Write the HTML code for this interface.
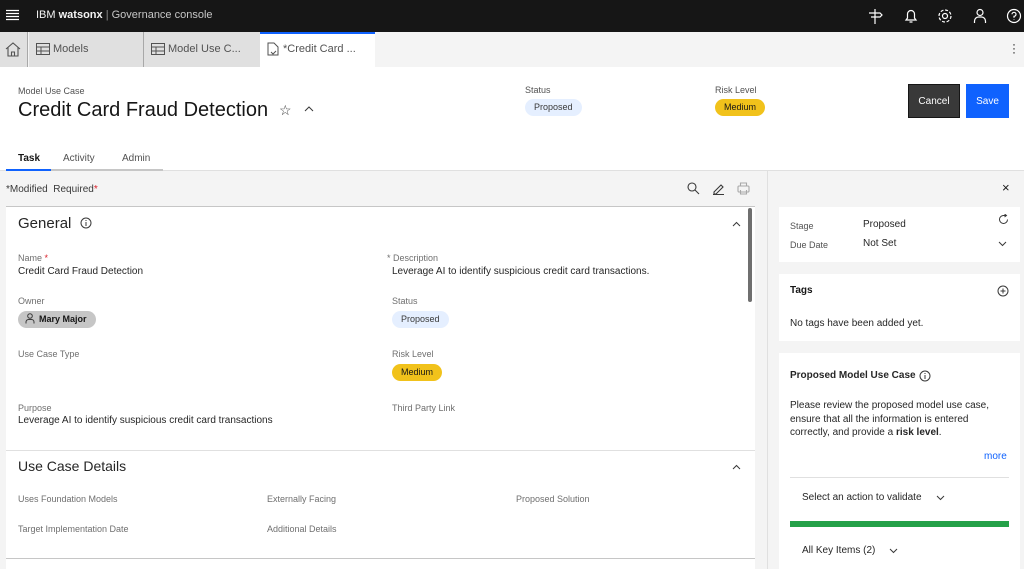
<!DOCTYPE html>
<html><head><meta charset="utf-8"><style>
*{box-sizing:border-box;margin:0;padding:0}
body{width:1024px;height:569px;overflow:hidden;font-family:"Liberation Sans",sans-serif;background:#f4f4f4;position:relative;color:#161616}
.a{position:absolute;white-space:nowrap}
.lbl{font-size:9px;color:#6f6f6f}
.val{font-size:10px;color:#262626}
.tag{position:absolute;height:17px;border-radius:9px;font-size:9px;padding:0 9px;line-height:17px}
.btn{display:flex;align-items:center;justify-content:center}
svg{position:absolute}
</style></head><body>
<div class="a" style="left:0;top:0;width:1024px;height:32px;background:#161616"></div>
<svg style="left:6px;top:9px" width="13" height="12"><path d="M0 1.5h13M0 4.5h13M0 7.5h13M0 10.5h13" stroke="#fff" stroke-width="1.2"/></svg>
<div class="a" style="left:36px;top:9px;font-size:11px;color:#f4f4f4">IBM <b>watsonx</b> <span style="color:#8d8d8d">|</span> <span style="color:#c6c6c6">Governance console</span></div>
<svg style="left:866px;top:7px" width="18" height="18" fill="none" stroke="#fff" stroke-width="1.2"><path d="M9 2v15M3 6h11l2 2-2 2H5"/></svg>
<svg style="left:902px;top:7px" width="18" height="18" fill="none" stroke="#fff" stroke-width="1.2"><path d="M4 13h10l-1.5-2V7a3.5 3.5 0 0 0-7 0v4zM7.5 15h3"/></svg>
<svg style="left:936px;top:7px" width="18" height="18" fill="none" stroke="#fff" stroke-width="1.2"><circle cx="9" cy="9" r="2.5"/><circle cx="9" cy="9" r="6" stroke-dasharray="3 1.7"/></svg>
<svg style="left:971px;top:7px" width="18" height="18" fill="none" stroke="#fff" stroke-width="1.2"><circle cx="9" cy="5.5" r="3"/><path d="M3.5 16v-2a4 4 0 0 1 4-4h3a4 4 0 0 1 4 4v2"/></svg>
<svg style="left:1005px;top:7px" width="18" height="18" fill="none" stroke="#fff" stroke-width="1.2"><circle cx="9" cy="9" r="6.5"/><path d="M7 7.3a2 2 0 1 1 2 2v1.5M9 12.5v.5"/></svg>

<div class="a" style="left:0;top:32px;width:1024px;height:35px;background:#f4f4f4"></div>
<div class="a" style="left:0;top:32px;width:28px;height:35px;background:#e0e0e0;border-right:1px solid #a8a8a8"></div>
<svg style="left:5px;top:42px" width="16" height="15" fill="none" stroke="#525252" stroke-width="1.1"><path d="M1 7L8 1l7 6M3 5.5V14h10V5.5M6.5 14v-4h3v4"/></svg>
<div class="a" style="left:29px;top:32px;width:115px;height:35px;background:#e0e0e0;border-right:1px solid #a8a8a8"></div>
<div class="a" style="left:144px;top:32px;width:116px;height:35px;background:#e0e0e0"></div>
<svg style="left:36px;top:43px" width="14" height="12" fill="none" stroke="#525252"><rect x=".5" y=".5" width="13" height="11"/><path d="M.5 4h13M.5 8h13M5 4v8"/></svg>
<div class="a" style="left:53px;top:43px;font-size:11px;color:#525252">Models</div>
<svg style="left:151px;top:43px" width="14" height="12" fill="none" stroke="#525252"><rect x=".5" y=".5" width="13" height="11"/><path d="M.5 4h13M.5 8h13M5 4v8"/></svg>
<div class="a" style="left:168px;top:43px;font-size:11px;color:#525252">Model Use C...</div>
<div class="a" style="left:260px;top:32px;width:115px;height:35px;background:#fff;border-top:2px solid #0f62fe"></div>
<svg style="left:267px;top:42px" width="12" height="14" fill="none" stroke="#525252"><path d="M1 1h6l4 4v8H1zM4 10l2 2 3-3"/></svg>
<div class="a" style="left:283px;top:43px;font-size:11px;color:#525252">*Credit Card ...</div>
<div class="a" style="left:1012px;top:42px;font-size:12px;color:#161616;line-height:4px">·<br>·<br>·</div>

<div class="a" style="left:0;top:67px;width:1024px;height:104px;background:#fff;border-bottom:1px solid #e0e0e0"></div>
<div class="a lbl" style="left:18px;top:86px;color:#525252">Model Use Case</div>
<div class="a" style="left:18px;top:99px;font-size:20px;color:#161616">Credit Card Fraud Detection</div>
<div class="a" style="left:279px;top:102px;font-size:14px;color:#393939">☆</div>
<svg style="left:304px;top:106px" width="10" height="6" fill="none" stroke="#393939"><path d="M1 5l4-4 4 4"/></svg>
<div class="a lbl" style="left:525px;top:85px;color:#525252">Status</div>
<div class="tag" style="left:525px;top:99px;background:#e5efff;color:#393939">Proposed</div>
<div class="a lbl" style="left:715px;top:85px;color:#525252">Risk Level</div>
<div class="tag" style="left:715px;top:99px;background:#f1c21b;color:#161616">Medium</div>
<div class="a btn" style="left:908px;top:84px;width:52px;height:34px;background:#393939;color:#fff;font-size:10px;border:1px solid #161616">Cancel</div>
<div class="a btn" style="left:966px;top:84px;width:43px;height:34px;background:#0f62fe;color:#fff;font-size:10px">Save</div>
<div class="a" style="left:18px;top:153px;font-size:10px;font-weight:bold">Task</div>
<div class="a" style="left:63px;top:153px;font-size:10px;color:#525252">Activity</div>
<div class="a" style="left:122px;top:153px;font-size:10px;color:#525252">Admin</div>
<div class="a" style="left:6px;top:169px;width:45px;height:2px;background:#0f62fe"></div>
<div class="a" style="left:51px;top:169px;width:112px;height:2px;background:#c6c6c6"></div>

<div class="a" style="left:767px;top:171px;width:1px;height:398px;background:#e0e0e0"></div>
<div class="a" style="left:6px;top:184px;font-size:10px;color:#393939">*Modified&nbsp; Required<span style="color:#da1e28">*</span></div>
<svg style="left:687px;top:182px" width="13" height="13" fill="none" stroke="#393939" stroke-width="1.1"><circle cx="5" cy="5" r="4"/><path d="M8 8l4 4"/></svg>
<svg style="left:712px;top:182px" width="13" height="13" fill="none" stroke="#393939" stroke-width="1.1"><path d="M2 10l7-7 2 2-7 7H2zM1 12.5h11"/></svg>
<svg style="left:737px;top:182px" width="13" height="13" fill="none" stroke="#a8a8a8" stroke-width="1.1"><rect x="1" y="4" width="11" height="6" rx="1"/><path d="M3.5 4V1h6v3M3.5 8v4h6V8"/></svg>
<div class="a" style="left:6px;top:206px;width:749px;height:1px;background:#c6c6c6"></div>

<div class="a" style="left:6px;top:207px;width:749px;height:243px;background:#fff"></div>
<div class="a" style="left:748px;top:208px;width:4px;height:94px;background:#6f6f6f;border-radius:2px"></div>
<div class="a" style="left:18px;top:215px;font-size:15px;color:#262626">General</div>
<svg style="left:80px;top:217px" width="12" height="12" fill="none" stroke="#393939"><circle cx="6" cy="6" r="5"/><path d="M6 5v4M6 3v1"/></svg>
<svg style="left:732px;top:221px" width="9" height="6" fill="none" stroke="#393939"><path d="M1 5l3.5-3.5L8 5"/></svg>
<div class="a lbl" style="left:18px;top:253px">Name <span style="color:#da1e28">*</span></div>
<div class="a val" style="left:18px;top:266px">Credit Card Fraud Detection</div>
<div class="a lbl" style="left:387px;top:253px">* Description</div>
<div class="a val" style="left:392px;top:266px">Leverage AI to identify suspicious credit card transactions.</div>
<div class="a lbl" style="left:18px;top:296px">Owner</div>
<div class="tag" style="left:18px;top:311px;width:78px;background:#c6c6c6;color:#161616;font-weight:bold;padding-left:21px">Mary Major</div>
<svg style="left:25px;top:313px" width="10" height="11" fill="none" stroke="#393939"><circle cx="5" cy="3" r="2.3"/><path d="M1 10.5V9a2.5 2.5 0 0 1 2.5-2.5h3A2.5 2.5 0 0 1 9 9v1.5"/></svg>
<div class="a lbl" style="left:392px;top:296px">Status</div>
<div class="tag" style="left:392px;top:311px;background:#e5efff;color:#393939">Proposed</div>
<div class="a lbl" style="left:18px;top:349px">Use Case Type</div>
<div class="a lbl" style="left:392px;top:349px">Risk Level</div>
<div class="tag" style="left:392px;top:364px;background:#f1c21b;color:#161616">Medium</div>
<div class="a lbl" style="left:18px;top:403px">Purpose</div>
<div class="a val" style="left:18px;top:415px">Leverage AI to identify suspicious credit card transactions</div>
<div class="a lbl" style="left:392px;top:403px">Third Party Link</div>

<div class="a" style="left:6px;top:450px;width:749px;height:1px;background:#e0e0e0"></div>
<div class="a" style="left:6px;top:451px;width:749px;height:107px;background:#fff"></div>
<div class="a" style="left:18px;top:458px;font-size:14px;color:#262626">Use Case Details</div>
<svg style="left:732px;top:464px" width="9" height="6" fill="none" stroke="#393939"><path d="M1 5l3.5-3.5L8 5"/></svg>
<div class="a lbl" style="left:18px;top:494px">Uses Foundation Models</div>
<div class="a lbl" style="left:267px;top:494px">Externally Facing</div>
<div class="a lbl" style="left:516px;top:494px">Proposed Solution</div>
<div class="a lbl" style="left:18px;top:524px">Target Implementation Date</div>
<div class="a lbl" style="left:267px;top:524px">Additional Details</div>
<div class="a" style="left:6px;top:558px;width:749px;height:1px;background:#c6c6c6"></div>
<div class="a" style="left:6px;top:559px;width:749px;height:10px;background:#fff"></div>

<div class="a" style="left:1002px;top:180px;font-size:13px;color:#161616">×</div>
<div class="a" style="left:779px;top:207px;width:241px;height:55px;background:#fff"></div>
<div class="a lbl" style="left:790px;top:221px;color:#525252">Stage</div>
<div class="a val" style="left:863px;top:219px">Proposed</div>
<div class="a lbl" style="left:790px;top:240px;color:#525252">Due Date</div>
<div class="a val" style="left:863px;top:238px">Not Set</div>
<svg style="left:998px;top:214px" width="11" height="11" fill="none" stroke="#393939"><path d="M9.5 5.5A4 4 0 1 1 6 1.5h2M6.5 0l2 1.5-2 1.5"/></svg>
<svg style="left:998px;top:241px" width="9" height="6" fill="none" stroke="#393939"><path d="M1 1l3.5 3.5L8 1"/></svg>
<div class="a" style="left:779px;top:274px;width:241px;height:67px;background:#fff"></div>
<div class="a" style="left:790px;top:285px;font-size:10px;font-weight:bold">Tags</div>
<svg style="left:997px;top:285px" width="12" height="12" fill="none" stroke="#393939"><circle cx="6" cy="6" r="5"/><path d="M6 3.5v5M3.5 6h5"/></svg>
<div class="a val" style="left:790px;top:318px">No tags have been added yet.</div>
<div class="a" style="left:779px;top:353px;width:241px;height:216px;background:#fff"></div>
<div class="a" style="left:790px;top:370px;font-size:10px;font-weight:bold;color:#262626">Proposed Model Use Case</div>
<svg style="left:919px;top:370px" width="12" height="12" fill="none" stroke="#393939"><circle cx="6" cy="6" r="5"/><path d="M6 5v4M6 3v1"/></svg>
<div class="a val" style="left:790px;top:399px;line-height:13.5px;white-space:normal;width:212px">Please review the proposed model use case, ensure that all the information is entered correctly, and provide a <b>risk level</b>.</div>
<div class="a" style="left:984px;top:451px;font-size:10px;color:#0f62fe">more</div>
<div class="a" style="left:790px;top:477px;width:219px;height:1px;background:#e0e0e0"></div>
<div class="a val" style="left:802px;top:492px">Select an action to validate</div>
<svg style="left:936px;top:495px" width="9" height="6" fill="none" stroke="#393939"><path d="M1 1l3.5 3.5L8 1"/></svg>
<div class="a" style="left:790px;top:521px;width:219px;height:6px;background:#24a148"></div>
<div class="a val" style="left:802px;top:545px">All Key Items (2)</div>
<svg style="left:889px;top:548px" width="9" height="6" fill="none" stroke="#393939"><path d="M1 1l3.5 3.5L8 1"/></svg>
</body></html>
